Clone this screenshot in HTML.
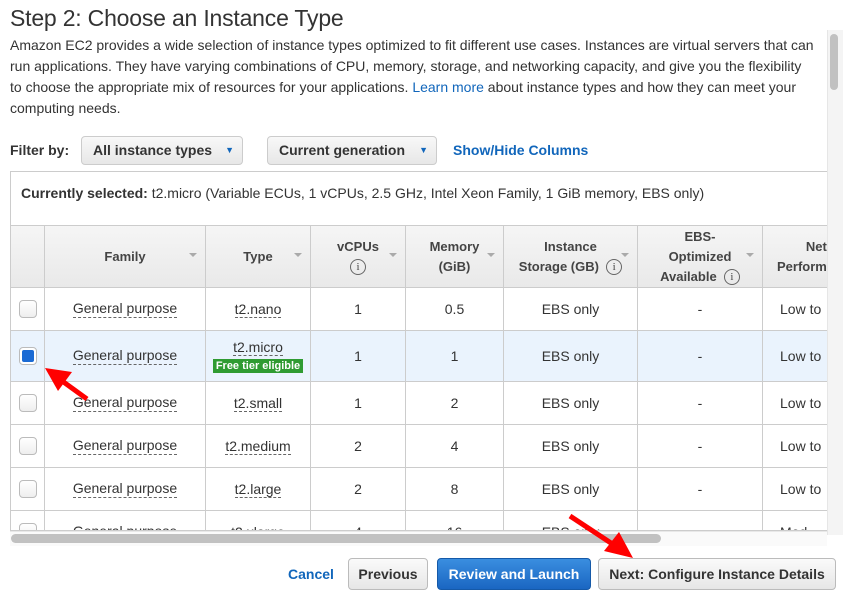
<!DOCTYPE html>
<html><head><meta charset="utf-8"><style>
*{margin:0;padding:0;box-sizing:border-box}
body{width:843px;height:598px;overflow:hidden;background:#fff;font-family:"Liberation Sans",Arial,sans-serif;color:#333;position:relative}
.a{position:absolute}
h1{position:absolute;left:10px;top:5px;font-size:23px;font-weight:normal;color:#333;letter-spacing:-0.2px}
p.d{position:absolute;left:10px;top:35px;width:806px;font-size:14px;line-height:21px;color:#333}
a{color:#1166bb;text-decoration:none}
.sel{position:absolute;top:136px;height:29px;border:1px solid #ccc;border-radius:4px;background:linear-gradient(#f8f8f8,#e7e7e7);font-weight:bold;font-size:14px;line-height:27px;padding-left:11px;color:#333}
.sel i{position:absolute;right:8px;top:0;font-style:normal;color:#1166bb;font-size:9px}
.cell{position:absolute;display:flex;align-items:center;justify-content:center;text-align:center;font-size:14px;border-right:1px solid #ccc;border-bottom:1px solid #ccc}
.hd{background:linear-gradient(#f5f5f5,#e9e9e9);font-weight:bold;font-size:13px;line-height:20px;color:#444}
.dash{border-bottom:1px dashed #666;line-height:17px}
.cb{width:18px;height:18px;border:1px solid #bbb;border-radius:4px;background:linear-gradient(#fff,#eee)}
.tri{position:absolute;right:8px;top:27px;width:0;height:0;border-left:4px solid transparent;border-right:4px solid transparent;border-top:4px solid #aaa}
.info{display:inline-block;width:16px;height:16px;border:1px solid #666;border-radius:50%;font-size:11px;line-height:14px;font-weight:normal;font-family:"Liberation Serif",serif;color:#444;vertical-align:middle;text-align:center}
.btn{position:absolute;top:558px;height:32px;border:1px solid #bbb;border-radius:4px;background:linear-gradient(#fafafa,#e6e6e6);font-weight:bold;font-size:14px;line-height:30px;text-align:center;color:#333}
</style></head><body>
<h1>Step 2: Choose an Instance Type</h1>
<p class="d">Amazon EC2 provides a wide selection of instance types optimized to fit different use cases. Instances are virtual servers that can run applications. They have varying combinations of CPU, memory, storage, and networking capacity, and give you the flexibility to choose the appropriate mix of resources for your applications. <a>Learn more</a> about instance types and how they can meet your computing needs.</p>
<div class="a" style="left:827px;top:30px;width:16px;height:505px;background:#f4f4f4;border-left:1px solid #e6e6e6"></div>
<div class="a" style="left:830px;top:34px;width:8px;height:56px;background:#c1c1c1;border-radius:4px"></div>

<div class="a" style="left:10px;top:142px;font-weight:bold;font-size:14px">Filter by:</div>
<div class="sel" style="left:81px;width:162px">All instance types<i>▼</i></div>
<div class="sel" style="left:267px;width:170px">Current generation<i>▼</i></div>
<div class="a" style="left:453px;top:142px;font-weight:bold;font-size:14px;color:#1166bb">Show/Hide Columns</div>

<div class="a" style="left:10px;top:171px;width:817px;height:360px;border:1px solid #ccc;border-right:none;overflow:hidden">
<div class="a" style="left:10px;top:13px;font-size:14px;white-space:nowrap"><b>Currently selected:</b> t2.micro (Variable ECUs, 1 vCPUs, 2.5 GHz, Intel Xeon Family, 1 GiB memory, EBS only)</div>
<div class="a" style="left:0;top:53px;width:820px;height:1px;background:#ccc"></div>
<div id="t" class="a" style="left:-1px;top:54px;width:860px;height:320px"></div>
</div>
<div class="a" style="left:10px;top:531px;width:817px;height:15px;background:#fafafa;border-top:1px solid #e8e8e8"></div>
<div class="a" style="left:11px;top:534px;width:650px;height:9px;background:#c1c1c1;border-radius:5px"></div>

<div class="a" style="left:288px;top:566px;font-weight:bold;font-size:14px;color:#1166bb">Cancel</div>
<div class="btn" style="left:348px;width:80px">Previous</div>
<div class="btn" style="left:437px;width:154px;background:linear-gradient(#3a8ee0,#1a66c2);border-color:#1559a8;color:#fff">Review and Launch</div>
<div class="btn" style="left:598px;width:238px">Next: Configure Instance Details</div>

<svg class="a" style="left:0;top:0" width="843" height="598">
<line x1="87" y1="399" x2="58" y2="378" stroke="#f00" stroke-width="5"/>
<polygon points="45,368 72,372 58,391" fill="#f00"/>
<line x1="570" y1="516" x2="617" y2="547" stroke="#f00" stroke-width="5"/>
<polygon points="633,558 604,551 619,532" fill="#f00"/>
</svg>

<script>
var cols=[0,35,196,301,396,494,628,753,830];
var heads=['','Family','Type','vCPUs<br><span class="info">i</span>','Memory<br>(GiB)','Instance<br>Storage (GB) &nbsp;<span class="info">i</span>','EBS-<br>Optimized<br>Available &nbsp;<span class="info">i</span>','<span style="display:block;margin-left:14px;text-align:right">Net<br>Perform</span>'];
var rows=[['nano','1','0.5','EBS only','-','Low to'],['micro','1','1','EBS only','-','Low to'],['small','1','2','EBS only','-','Low to'],['medium','2','4','EBS only','-','Low to'],['large','2','8','EBS only','-','Low to'],['xlarge','4','16','EBS only','','Mod']];
var tops=[0,62,105,156,199,242,285,328];
var h='';
for(var c=0;c<8;c++){var w=cols[c+1]-cols[c];h+='<div class="cell hd" style="left:'+cols[c]+'px;top:0;width:'+w+'px;height:62px;border-left:'+(c==0?'1px solid #ccc':'none')+(c==7?';justify-content:flex-start':'')+'"><div>'+heads[c]+'</div>'+(c>0&&c<7?'<span class="tri"></span>':'')+'</div>';}
for(var r=0;r<6;r++){var R=rows[r],t=tops[r+1],hh=tops[r+2]-t,bg=r==1?'#eaf3fd':'#fff';
var vals=['<span class="cb" style="'+(r==1?'background:#fff;display:flex;align-items:center;justify-content:center':'')+'">'+(r==1?'<span style="width:12px;height:12px;background:#1a6ad4;border-radius:2px;display:block"></span>':'')+'</span>','<span class="dash">General purpose</span>','<div><span class="dash">t2.'+R[0]+'</span>'+(r==1?'<br><span style="background:#2f9b32;color:#fff;font-size:11px;font-weight:bold;padding:0 3px;line-height:14px;display:inline-block;margin-top:2px">Free tier eligible</span>':'')+'</div>',R[1],R[2],R[3],R[4],'<span style="margin-left:17px">'+R[5]+'</span>'];
for(var c=0;c<8;c++){var w=cols[c+1]-cols[c];h+='<div class="cell" style="left:'+cols[c]+'px;top:'+t+'px;width:'+w+'px;height:'+hh+'px;background:'+bg+';border-left:'+(c==0?'1px solid #ccc':'none')+(c==7?';justify-content:flex-start':'')+'">'+vals[c]+'</div>';}}
document.getElementById('t').innerHTML=h;
</script>
</body></html>
